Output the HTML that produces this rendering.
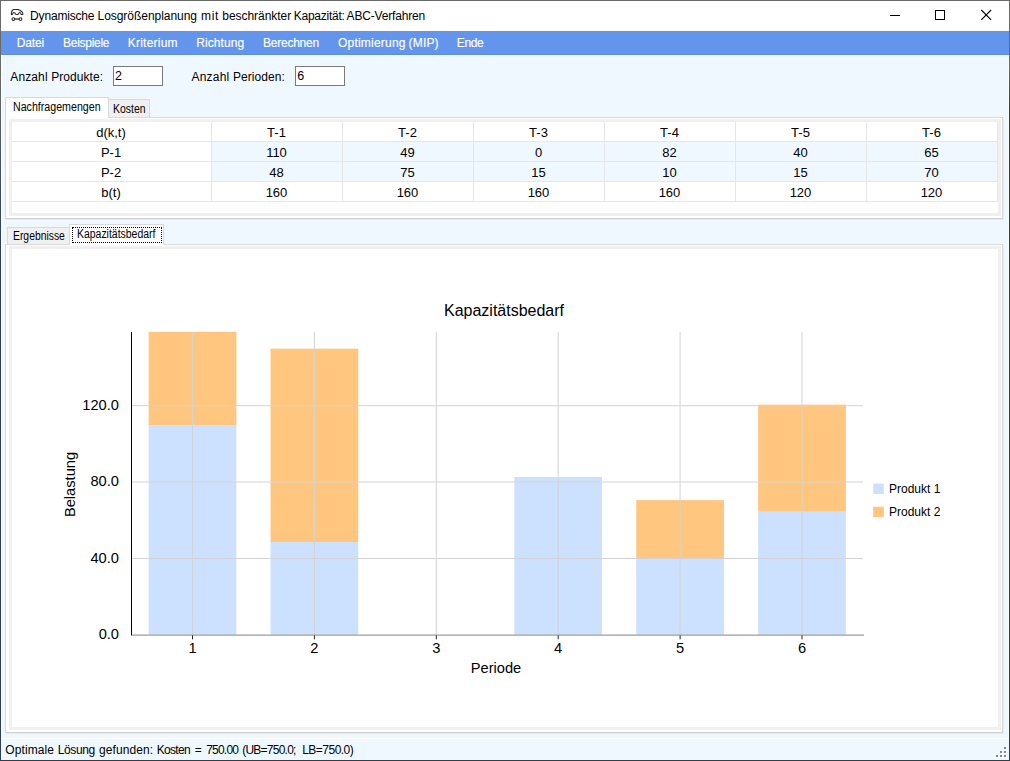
<!DOCTYPE html>
<html lang="de">
<head>
<meta charset="utf-8">
<title>Dynamische Losgrößenplanung mit beschränkter Kapazität: ABC-Verfahren</title>
<style>
html,body{margin:0;padding:0;}
body{width:1010px;height:761px;overflow:hidden;background:#f0f8ff;position:relative;font-family:"Liberation Sans",Arial,sans-serif;color:#000;}
.abs{position:absolute;}
.t{position:absolute;white-space:nowrap;line-height:1;}
#win i{position:absolute;display:block;z-index:50;}
#titlebar{left:1px;top:1px;width:1008px;height:30px;background:#fff;}
#menubar{left:1px;top:31px;width:1008px;height:24px;background:#6495ed;}
.tb{position:absolute;box-sizing:border-box;border:1px solid #7a7a7a;background:#fff;width:50px;height:20px;}
.tabsel{position:absolute;box-sizing:border-box;background:#fff;border:1px solid #d9d9d9;border-bottom:none;}
.tabun{position:absolute;box-sizing:border-box;background:#f0f0f0;border:1px solid #d9d9d9;border-bottom:none;}
.page{position:absolute;box-sizing:border-box;background:#fff;border:1px solid #d9d9d9;box-shadow:1px 1px 0 #e6ebf0;}
.inner{position:absolute;box-sizing:border-box;background:#fff;border:3px solid #f0f0f0;}
.cell{position:absolute;box-sizing:border-box;height:20px;border-right:1px solid #e6e6e6;border-bottom:1px solid #e6e6e6;font-size:13px;line-height:19px;text-align:center;padding-top:1px;padding-right:1px;}
#status{left:1px;top:739px;width:1008px;height:21px;background:#f0f8ff;}
</style>
</head>
<body>
<div id="titlebar" class="abs"></div>
<svg class="abs" style="left:10px;top:8px" width="16" height="16" viewBox="0 0 16 16" fill="none" stroke="#2a2a2a" stroke-width="1.25" stroke-linecap="round" stroke-linejoin="round">
<path d="M1.4 6.4 V4.6 C1.7 3 2.6 1.45 3.9 1.45 H8.1 C9.5 2 10.3 2.5 11 3 C12 3.6 12.7 4.2 12.8 5 V6.4 H11.1 C11 5.2 10.5 4.5 9.8 4.5 C9.2 4.5 8.6 5.2 8.1 6.4 H5.8 C5.3 5.2 4.6 4.5 3.8 4.5 C3.1 4.5 2.7 5.2 2.6 6.4 Z" stroke-width="1.05"/>
<circle cx="3.4" cy="11.05" r="1.4" stroke-width="1.05"/><circle cx="10.45" cy="11.05" r="1.4" stroke-width="1.05"/><path d="M4.9 11.05 H9" stroke-width="1.3" stroke-linecap="butt"/>
</svg>
<span class="t" style="left:30.10px;top:10px;font-size:12px;letter-spacing:-0.181px;">Dynamische</span> <span class="t" style="left:97.50px;top:10px;font-size:12px;letter-spacing:-0.039px;">Losgrößenplanung</span> <span class="t" style="left:201.00px;top:10px;font-size:12px;letter-spacing:0.650px;">mit</span> <span class="t" style="left:222.30px;top:10px;font-size:12px;letter-spacing:-0.043px;">beschränkter</span> <span class="t" style="left:293.80px;top:10px;font-size:12px;letter-spacing:-0.264px;">Kapazität:</span> <span class="t" style="left:346.60px;top:10px;font-size:12px;letter-spacing:-0.168px;">ABC-Verfahren</span>
<svg class="abs" style="left:881px;top:1px" width="128" height="30" viewBox="0 0 128 30" fill="none" stroke="#000" stroke-width="1" shape-rendering="crispEdges">
<path d="M9 14.5 H19"/><rect x="54.5" y="9.5" width="9" height="9"/></svg>
<svg class="abs" style="left:881px;top:1px" width="128" height="30" viewBox="0 0 128 30" fill="none" stroke="#000" stroke-width="1.1">
<path d="M100.3 9.0 L110.1 18.8 M110.1 9.0 L100.3 18.8"/></svg>
<div class="abs" style="left:1px;top:55px;width:1008px;height:705px;box-sizing:border-box;border:1px solid #fdfeff"></div>
<div id="menubar" class="abs"><div class="abs" style="left:0;top:23px;width:1008px;height:1px;background:#5a8de8"></div></div>
<span class="t" style="left:16.80px;top:37px;font-size:12px;letter-spacing:-0.154px;color:#fff;-webkit-text-stroke:0.15px #fff;">Datei</span> <span class="t" style="left:63.10px;top:37px;font-size:12px;letter-spacing:-0.288px;color:#fff;-webkit-text-stroke:0.15px #fff;">Beispiele</span> <span class="t" style="left:127.70px;top:37px;font-size:12px;letter-spacing:0.236px;color:#fff;-webkit-text-stroke:0.15px #fff;">Kriterium</span> <span class="t" style="left:196.30px;top:37px;font-size:12px;letter-spacing:0.075px;color:#fff;-webkit-text-stroke:0.15px #fff;">Richtung</span> <span class="t" style="left:263.00px;top:37px;font-size:12px;letter-spacing:-0.243px;color:#fff;-webkit-text-stroke:0.15px #fff;">Berechnen</span> <span class="t" style="left:338.00px;top:37px;font-size:12px;letter-spacing:0.212px;color:#fff;-webkit-text-stroke:0.15px #fff;">Optimierung</span> <span class="t" style="left:408.60px;top:37px;font-size:12px;letter-spacing:0.168px;color:#fff;-webkit-text-stroke:0.15px #fff;">(MIP)</span> <span class="t" style="left:456.80px;top:37px;font-size:12px;letter-spacing:-0.377px;color:#fff;-webkit-text-stroke:0.15px #fff;">Ende</span>
<span class="t" style="left:10.30px;top:71px;font-size:12px;letter-spacing:0.119px;">Anzahl</span> <span class="t" style="left:51.20px;top:71px;font-size:12px;letter-spacing:0.066px;">Produkte:</span><div class="tb" style="left:113px;top:66px"></div><span class="t" style="left:114.9px;top:70px;font-size:12.5px">2</span><span class="t" style="left:191.50px;top:71px;font-size:12px;letter-spacing:0.219px;">Anzahl</span> <span class="t" style="left:232.90px;top:71px;font-size:12px;letter-spacing:0.078px;">Perioden:</span><div class="tb" style="left:295px;top:66px"></div><span class="t" style="left:297.3px;top:70px;font-size:12.5px">6</span>
<div class="page" style="left:5px;top:117px;width:998px;height:102px;border-bottom-color:#d0d0d0"></div>
<div class="inner" style="left:9px;top:119px;width:992px;height:97px"></div>
<div class="tabun" style="left:108px;top:99px;width:42px;height:18px"></div>
<div class="tabsel" style="left:5px;top:97px;width:104px;height:21px"></div>
<span class="t" style="left:12.50px;top:101px;font-size:12px;transform-origin:0 0;transform:scaleX(0.8872);">Nachfragemengen</span><span class="t" style="left:112.80px;top:103px;font-size:12px;transform-origin:0 0;transform:scaleX(0.8699);">Kosten</span>
<div id="grid" class="abs" style="left:12px;top:122px;width:986px;height:91px;background:#fff">
<div class="cell" style="left:0px;top:0px;width:200px;background:#fff">d(k,t)</div>
<div class="cell" style="left:200px;top:0px;width:131px;background:#fff">T-1</div>
<div class="cell" style="left:331px;top:0px;width:131px;background:#fff">T-2</div>
<div class="cell" style="left:462px;top:0px;width:131px;background:#fff">T-3</div>
<div class="cell" style="left:593px;top:0px;width:131px;background:#fff">T-4</div>
<div class="cell" style="left:724px;top:0px;width:131px;background:#fff">T-5</div>
<div class="cell" style="left:855px;top:0px;width:131px;background:#fff">T-6</div>
<div class="cell" style="left:0px;top:20px;width:200px;background:#fff">P-1</div>
<div class="cell" style="left:200px;top:20px;width:131px;background:#f0f8ff">110</div>
<div class="cell" style="left:331px;top:20px;width:131px;background:#f0f8ff">49</div>
<div class="cell" style="left:462px;top:20px;width:131px;background:#f0f8ff">0</div>
<div class="cell" style="left:593px;top:20px;width:131px;background:#f0f8ff">82</div>
<div class="cell" style="left:724px;top:20px;width:131px;background:#f0f8ff">40</div>
<div class="cell" style="left:855px;top:20px;width:131px;background:#f0f8ff">65</div>
<div class="cell" style="left:0px;top:40px;width:200px;background:#fff">P-2</div>
<div class="cell" style="left:200px;top:40px;width:131px;background:#f0f8ff">48</div>
<div class="cell" style="left:331px;top:40px;width:131px;background:#f0f8ff">75</div>
<div class="cell" style="left:462px;top:40px;width:131px;background:#f0f8ff">15</div>
<div class="cell" style="left:593px;top:40px;width:131px;background:#f0f8ff">10</div>
<div class="cell" style="left:724px;top:40px;width:131px;background:#f0f8ff">15</div>
<div class="cell" style="left:855px;top:40px;width:131px;background:#f0f8ff">70</div>
<div class="cell" style="left:0px;top:60px;width:200px;background:#fff">b(t)</div>
<div class="cell" style="left:200px;top:60px;width:131px;background:#fff">160</div>
<div class="cell" style="left:331px;top:60px;width:131px;background:#fff">160</div>
<div class="cell" style="left:462px;top:60px;width:131px;background:#fff">160</div>
<div class="cell" style="left:593px;top:60px;width:131px;background:#fff">160</div>
<div class="cell" style="left:724px;top:60px;width:131px;background:#fff">120</div>
<div class="cell" style="left:855px;top:60px;width:131px;background:#fff">120</div>
</div>
<div class="page" style="left:5px;top:244px;width:998px;height:489px;border-bottom-color:#d0d0d0"></div>
<div class="inner" style="left:9px;top:246px;width:992px;height:484px"></div>
<div class="tabun" style="left:7px;top:227px;width:64px;height:17px"></div>
<div class="tabsel" style="left:69px;top:224px;width:95px;height:21px"></div>
<div class="abs" style="left:72px;top:227px;width:90px;height:16px;box-sizing:border-box;border:1px dotted #000"></div>
<span class="t" style="left:12.80px;top:230px;font-size:12px;transform-origin:0 0;transform:scaleX(0.8643);">Ergebnisse</span><span class="t" style="left:77.30px;top:228px;font-size:12px;transform-origin:0 0;transform:scaleX(0.8705);">Kapazitätsbedarf</span>
<svg id="chart" class="abs" style="left:12px;top:249px" width="986" height="478" viewBox="12 249 986 478" font-family="'Liberation Sans',Arial,sans-serif" fill="#000">
<rect x="148.65" y="425.40" width="87.7" height="209.30" fill="#cce0ff"/>
<rect x="148.65" y="331.80" width="87.7" height="93.60" fill="#ffc67f"/>
<rect x="270.55" y="542.00" width="87.7" height="92.70" fill="#cce0ff"/>
<rect x="270.55" y="348.65" width="87.7" height="193.35" fill="#ffc67f"/>
<rect x="514.35" y="477.00" width="87.7" height="157.70" fill="#cce0ff"/>
<rect x="636.25" y="559.50" width="87.7" height="75.20" fill="#cce0ff"/>
<rect x="636.25" y="500.10" width="87.7" height="59.40" fill="#ffc67f"/>
<rect x="758.15" y="511.70" width="87.7" height="123.00" fill="#cce0ff"/>
<rect x="758.15" y="404.60" width="87.7" height="107.10" fill="#ffc67f"/>
<path d="M192.50 332 V634.70 M314.40 332 V634.70 M436.30 332 V634.70 M558.20 332 V634.70 M680.10 332 V634.70 M802.00 332 V634.70 M131.5 558.5 H863 M131.5 482.0 H863 M131.5 405.7 H863" stroke="#d3d3d3" stroke-width="1" fill="none"/>
<path d="M131.5 635.1 H864" stroke="#9c9c9c" stroke-width="1.35" fill="none"/>
<path d="M131.5 332 V635.4" stroke="#000" stroke-width="1" fill="none"/>
<path d="M192.50 635.4 V639.3 M314.40 635.4 V639.3 M436.30 635.4 V639.3 M558.20 635.4 V639.3 M680.10 635.4 V639.3 M802.00 635.4 V639.3" stroke="#222" stroke-width="1" fill="none"/>
<text x="119" y="639.1" font-size="14.67" text-anchor="end">0.0</text>
<text x="119" y="562.9" font-size="14.67" text-anchor="end">40.0</text>
<text x="119" y="486.4" font-size="14.67" text-anchor="end">80.0</text>
<text x="119" y="410.1" font-size="14.67" text-anchor="end">120.0</text>
<text x="192.5" y="653" font-size="14.67" text-anchor="middle">1</text>
<text x="314.4" y="653" font-size="14.67" text-anchor="middle">2</text>
<text x="436.3" y="653" font-size="14.67" text-anchor="middle">3</text>
<text x="558.2" y="653" font-size="14.67" text-anchor="middle">4</text>
<text x="680.1" y="653" font-size="14.67" text-anchor="middle">5</text>
<text x="802.0" y="653" font-size="14.67" text-anchor="middle">6</text>
<text x="496" y="673" font-size="14.67" text-anchor="middle">Periode</text>
<text transform="translate(75.4 484.5) rotate(-90)" font-size="14.67" text-anchor="middle">Belastung</text>
<text x="504" y="316" font-size="16" text-anchor="middle">Kapazitätsbedarf</text>
<rect x="873.2" y="483.6" width="10.6" height="10.5" fill="#cce0ff"/>
<rect x="873.2" y="506.7" width="10.6" height="10.5" fill="#ffc67f"/>
<text x="889" y="493" font-size="12">Produkt 1</text>
<text x="889" y="516" font-size="12">Produkt 2</text>
</svg>
<div class="abs" style="left:1px;top:738px;width:1008px;height:1px;background:#fff"></div>
<div id="status" class="abs">
<i class="abs" style="left:1004px;top:9px;width:2px;height:2px;background:#fff"></i><i class="abs" style="left:1003px;top:8px;width:2px;height:2px;background:#868686"></i><i class="abs" style="left:1000px;top:13px;width:2px;height:2px;background:#fff"></i><i class="abs" style="left:999px;top:12px;width:2px;height:2px;background:#868686"></i><i class="abs" style="left:1004px;top:13px;width:2px;height:2px;background:#fff"></i><i class="abs" style="left:1003px;top:12px;width:2px;height:2px;background:#868686"></i><i class="abs" style="left:996px;top:17px;width:2px;height:2px;background:#fff"></i><i class="abs" style="left:995px;top:16px;width:2px;height:2px;background:#868686"></i><i class="abs" style="left:1000px;top:17px;width:2px;height:2px;background:#fff"></i><i class="abs" style="left:999px;top:16px;width:2px;height:2px;background:#868686"></i><i class="abs" style="left:1004px;top:17px;width:2px;height:2px;background:#fff"></i><i class="abs" style="left:1003px;top:16px;width:2px;height:2px;background:#868686"></i>
</div>
<span class="t" style="left:5.30px;top:744px;font-size:12px;letter-spacing:0.096px;">Optimale</span> <span class="t" style="left:57.80px;top:744px;font-size:12px;letter-spacing:-0.395px;">Lösung</span> <span class="t" style="left:99.00px;top:744px;font-size:12px;letter-spacing:0.076px;">gefunden:</span> <span class="t" style="left:156.80px;top:744px;font-size:12px;letter-spacing:-0.712px;">Kosten</span> <span class="t" style="left:194.70px;top:744px;font-size:12px;letter-spacing:0.000px;">=</span> <span class="t" style="left:206.20px;top:744px;font-size:12px;letter-spacing:-0.781px;">750.00</span> <span class="t" style="left:242.20px;top:744px;font-size:12px;letter-spacing:-0.761px;">(UB=750.0;</span> <span class="t" style="left:302.20px;top:744px;font-size:12px;letter-spacing:-0.515px;">LB=750.0)</span>
<div id="win"><i style="left:0;top:0;width:1010px;height:1px;background:#686868"></i><i style="left:0;top:0;width:1px;height:761px;background:linear-gradient(#6a6a66 0,#6a6a66 10%,#2d3d5e 32%,#2d3d5e 100%)"></i><i style="left:1009px;top:0;width:1px;height:761px;background:linear-gradient(#6a6a66 0,#6a6a66 9%,#2d3d5e 14%,#2d3d5e 100%)"></i><i style="left:0;top:760px;width:1010px;height:1px;background:#333b4c"></i></div>
</body>
</html>
